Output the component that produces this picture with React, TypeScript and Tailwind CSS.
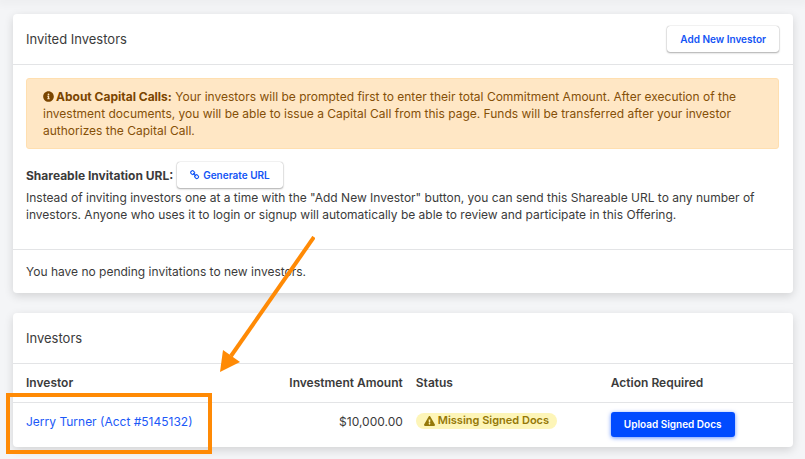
import { ReactNode } from 'react';
import { FaInfoCircle, FaExclamationTriangle } from 'react-icons/fa';

interface Investor {
  id: string;
  name: string;
  account: string;
  amount: string;
  status: string;
}

const investors: Investor[] = [
  { id: '1', name: 'Jerry Turner', account: '5145132', amount: '$10,000.00', status: 'Missing Signed Docs' },
];

function ChainIcon() {
  return (
    <svg viewBox="0 0 1792 1792" fill="currentColor" aria-hidden="true" className="h-[10px] w-[10px]">
      <path d="M1456 1216q0-40-28-68l-208-208q-28-28-68-28-42 0-72 32 3 3 19 18.5t21.5 21.5 15 19 13 25.5 3.5 27.5q0 40-28 68t-68 28q-15 0-27.5-3.5t-25.5-13-19-15-21.5-21.5-18.5-19q-33 31-33 73 0 40 28 68l206 207q27 27 68 27 40 0 68-26l147-146q28-28 28-67zm-703-705q0-40-28-68l-206-207q-28-28-68-28-39 0-68 27l-147 146q-28 28-28 67 0 40 28 68l208 208q27 27 68 27 42 0 72-31-3-3-19-18.5t-21.5-21.5-15-19-13-25.5-3.5-27.5q0-40 28-68t68-28q15 0 27.5 3.5t25.5 13 19 15 21.5 21.5 18.5 19q33-31 33-73zm895 705q0 120-85 203l-147 146q-83 83-203 83-121 0-204-85l-206-207q-83-83-83-203 0-123 88-209l-88-88q-86 88-208 88-120 0-204-84l-208-208q-84-84-84-204t85-203l147-146q83-83 203-83 121 0 204 85l206 207q83 83 83 203 0 123-88 209l88 88q86-88 208-88 120 0 204 84l208 208q84 84 84 204z" />
    </svg>
  );
}

function Card({ title, action, children }: { title: string; action?: ReactNode; children: ReactNode }) {
  return (
    <section className="rounded bg-white shadow-[0_3px_10px_rgba(0,0,0,0.14)]">
      <header className="flex h-[51px] items-center justify-between border-b border-[#e3e4e6] pr-[14px] pl-[13px]">
        <h2 className="text-[13px]">{title}</h2>
        {action}
      </header>
      {children}
    </section>
  );
}

function LightButton({ children }: { children: ReactNode }) {
  return (
    <button
      type="button"
      className="inline-flex h-[26px] items-center gap-[3px] rounded-[3px] bg-white px-[13px] text-[10px] font-semibold text-[#1354f5] shadow-[0_0_1px_rgba(0,0,0,0.4),0_1px_2px_rgba(0,0,0,0.3)]"
    >
      {children}
    </button>
  );
}

export default function App() {
  return (
    <main className="relative min-h-screen overflow-hidden bg-[#f4f5f7] font-['Inter',sans-serif] text-[12px] leading-[17px] text-[#3b3b3b]">
      <div className="h-0 shadow-[0_0_10px_3px_rgba(0,0,0,0.05)]" />
      <div className="flex flex-col gap-5 py-[14px] pr-3 pl-[13px]">
        <Card title="Invited Investors" action={<LightButton>Add New Investor</LightButton>}>
          <div className="border-b border-[#e3e4e6] pt-[13px] pr-[14px] pb-[26px] pl-[13px]">
            <div className="rounded-[3px] border border-[#ffdfb0] bg-[#ffe7c5] px-4 py-[9px] text-[#855008]">
              <FaInfoCircle className="mr-[2px] inline h-[11px] w-[11px] align-[-1px] text-[#7a4500]" />
              <strong className="font-bold text-[#7a4500]">About Capital Calls:</strong> Your investors will be prompted first to
              enter their total Commitment Amount. After execution of the investment documents, you will be able to issue a
              Capital Call from this page. Funds will be transferred after your investor authorizes the Capital Call.
            </div>
            <div className="mt-[13px] mb-px flex items-center gap-1">
              <strong className="font-bold">Shareable Invitation URL:</strong>
              <LightButton>
                <ChainIcon />
                Generate URL
              </LightButton>
            </div>
            <p>
              Instead of inviting investors one at a time with the "Add New Investor" button, you can send this Shareable URL to
              any number of investors. Anyone who uses it to login or signup will automatically be able to review and
              participate in this Offering.
            </p>
          </div>
          <p className="px-[13px] py-[13px]">You have no pending invitations to new investors.</p>
        </Card>

        <Card title="Investors">
          <table className="w-full border-collapse">
            <thead>
              <tr className="h-[38px] border-b border-[#e3e4e6] text-left">
                <th className="w-[30%] pl-[13px] font-semibold">Investor</th>
                <th className="w-[21%] pr-2 text-right font-semibold">Investment Amount</th>
                <th className="w-[25%] pl-[5px] font-semibold">Status</th>
                <th className="w-[24%] pl-[5px] font-semibold">Action Required</th>
              </tr>
            </thead>
            <tbody>
              {investors.map((inv) => (
                <tr key={inv.id} className="h-[45px] align-top">
                  <td className="py-[10px] pl-[13px]">
                    <div className="relative w-fit">
                      <a href="#investor" className="text-[#1b59f8]">
                        {inv.name} (Acct #{inv.account})
                      </a>
                      <span className="pointer-events-none absolute -top-5 -right-[19px] -bottom-6 -left-5 border-4 border-[#ff8a05]" />
                    </div>
                  </td>
                  <td className="py-[10px] pr-2 text-right">{inv.amount}</td>
                  <td className="py-[10px] pl-[5px]">
                    <span className="inline-flex h-4 items-center gap-[3px] rounded-full bg-[#fdf5b8] px-2 text-[11px] font-semibold text-[#957807]">
                      <FaExclamationTriangle className="h-[10px] w-[11px]" />
                      {inv.status}
                    </span>
                  </td>
                  <td className="py-[9px] pl-[5px]">
                    <button
                      type="button"
                      className="h-[25px] rounded-[3px] bg-[#004bff] px-[13px] text-[10px] font-semibold text-white shadow-[0_1px_4px_rgba(0,75,255,0.6)]"
                    >
                      Upload Signed Docs
                    </button>
                  </td>
                </tr>
              ))}
            </tbody>
          </table>
        </Card>
      </div>

      <svg
        viewBox="0 0 96 136"
        aria-hidden="true"
        className="pointer-events-none absolute top-[236px] left-[219px] h-[136px] w-24"
      >
        <path d="M95 1L12 120" stroke="#ff8a05" strokeWidth="4" />
        <path d="M1 136L4 114L21 126Z" fill="#ff8a05" />
      </svg>
    </main>
  );
}
